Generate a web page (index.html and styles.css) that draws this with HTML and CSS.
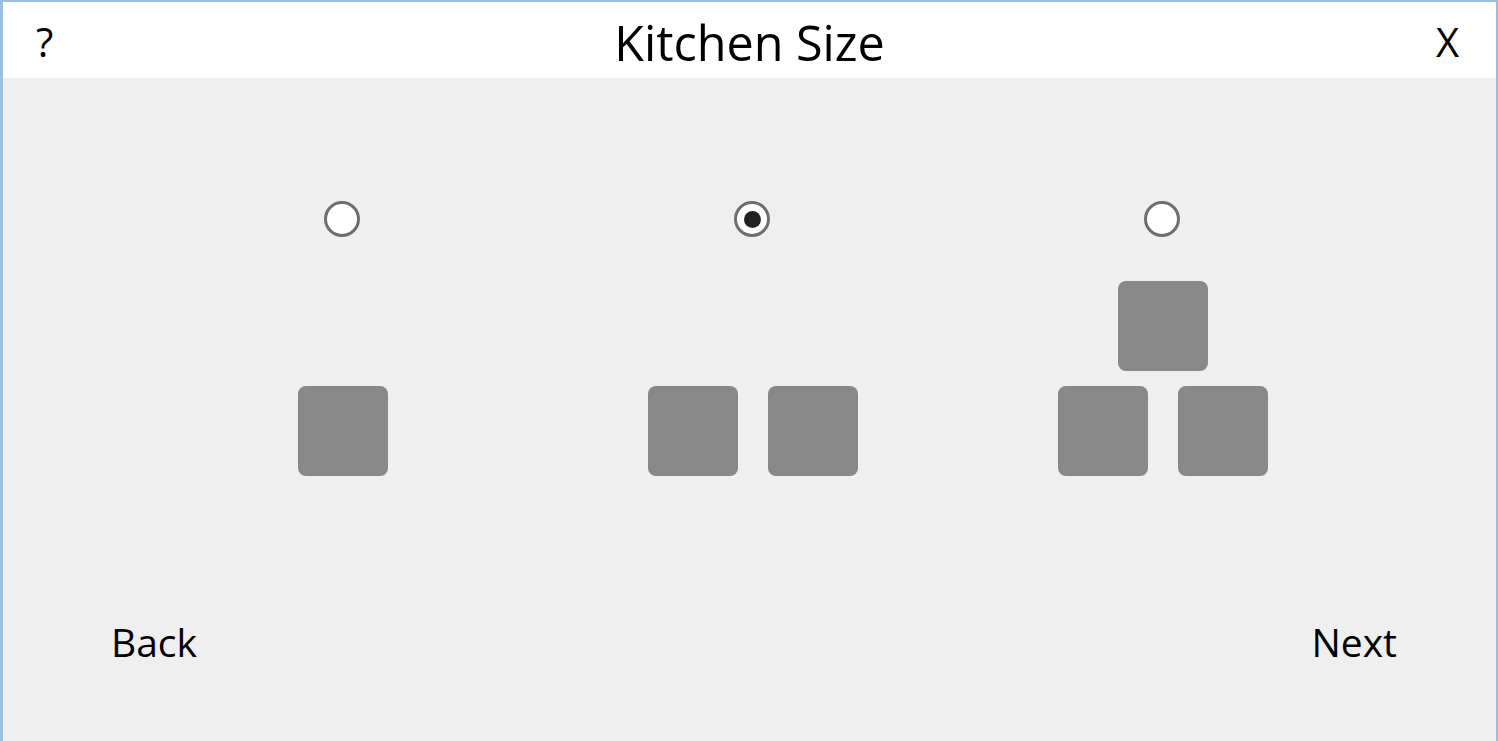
FILE: index.html
```html
<!DOCTYPE html>
<html lang="en">
	<head>
		<meta charset="UTF-8" />
		<meta name="viewport" content="width=device-width, initial-scale=1.0" />
		<title>Kitchen Size</title>
		<link rel="stylesheet" href="styles.css">
	</head>
	<body>
		<div class="window">
			<header class="titlebar">
				<button class="bar-button help" type="button">?</button>
				<h1 class="title">Kitchen Size</h1>
				<button class="bar-button close" type="button">X</button>
			</header>

			<main class="content">
				<div class="options">
					<label class="option">
						<input class="radio" type="radio" name="size" value="small" />
						<span class="figure">
							<span class="row">
								<span class="block"></span>
							</span>
						</span>
					</label>

					<label class="option">
						<input class="radio" type="radio" name="size" value="medium" checked />
						<span class="figure">
							<span class="row">
								<span class="block"></span>
								<span class="block"></span>
							</span>
						</span>
					</label>

					<label class="option">
						<input class="radio" type="radio" name="size" value="large" />
						<span class="figure">
							<span class="row">
								<span class="block"></span>
							</span>
							<span class="row">
								<span class="block"></span>
								<span class="block"></span>
							</span>
						</span>
					</label>
				</div>

				<nav class="nav">
					<button class="nav-button" type="button">Back</button>
					<button class="nav-button" type="button">Next</button>
				</nav>
			</main>
		</div>
	</body>
</html>
```

FILE: styles.css
```css
html,
body {
	margin: 0;
	height: 100%;
}

body {
	font-family: "Open Sans", "Noto Sans", Arial, sans-serif;
	color: #000;
	background-color: #efefef;
}

.window {
	display: flex;
	flex-direction: column;
	box-sizing: border-box;
	height: 100%;
	border-top: 2px solid #9dbfdf;
	border-left: 3px solid #9dbfdf;
	border-right: 2px solid #9dbfdf;
}

.titlebar {
	display: grid;
	grid-template-columns: 1fr auto 1fr;
	align-items: center;
	height: 76px;
	padding: 4px 37px 0 33px;
	box-sizing: border-box;
	background-color: #fff;
}

.bar-button {
	padding: 0;
	border: none;
	font-family: inherit;
	font-size: 40px;
	line-height: 1;
	color: #000;
	background: none;
}

.help {
	justify-self: start;
}

.close {
	justify-self: end;
}

.title {
	margin: 0 -1px 0 3px;
	font-weight: 400;
	font-size: 48.5px;
	line-height: 1;
}

.content {
	flex: 1;
	display: flex;
	flex-direction: column;
	background-color: #efefef;
}

.options {
	display: grid;
	grid-template-columns: repeat(3, 410px);
	padding: 123px 0 0 134px;
}

.option {
	display: flex;
	flex-direction: column;
	align-items: center;
}

.radio {
	appearance: none;
	box-sizing: border-box;
	display: grid;
	place-items: center;
	width: 36px;
	height: 36px;
	margin: 0;
	border: 3px solid #6e6e6e;
	border-radius: 50%;
	background-color: #fff;
}

.radio:checked::before {
	content: "";
	width: 17px;
	height: 17px;
	border-radius: 50%;
	background-color: #222;
}

.figure {
	display: flex;
	flex-direction: column;
	align-items: center;
	justify-content: flex-end;
	gap: 15px;
	height: 195px;
	margin: 44px 0 0 2px;
}

.row {
	display: flex;
	gap: 30px;
}

.block {
	width: 90px;
	height: 90px;
	border-radius: 8px;
	background-color: #888;
}

.nav {
	display: flex;
	justify-content: space-between;
	padding: 146px 99px 0 108px;
}

.nav-button {
	padding: 0;
	border: none;
	font-family: inherit;
	font-size: 39px;
	line-height: 1;
	color: #000;
	background: none;
}
```
